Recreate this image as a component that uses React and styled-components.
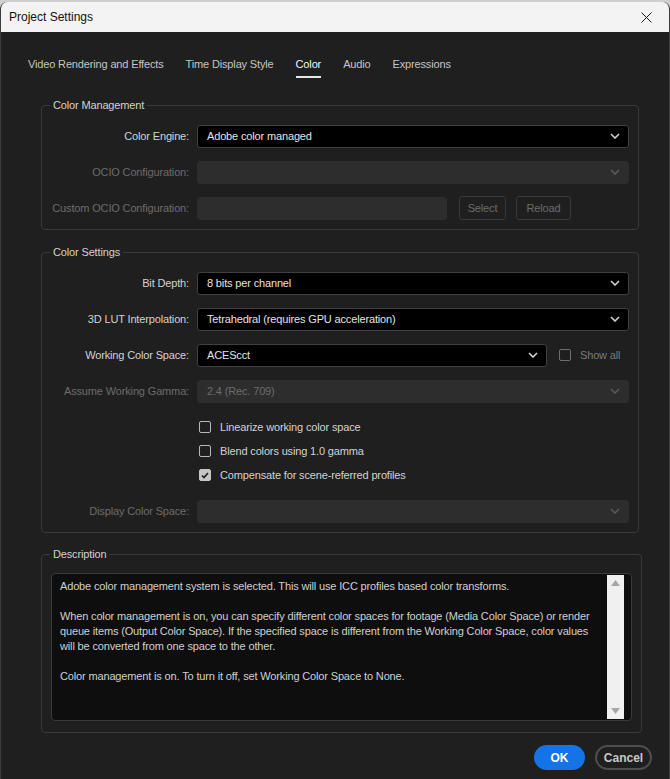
import React from 'react';
import styled, { createGlobalStyle, css } from 'styled-components';

const Colors = {
  page: '#cfcfcf',
  titleBar: '#f3f3f3',
  body: '#1f1f1f',
  border: '#3a3a3a',
  text: '#d2d2d2',
  dim: '#6c6c6c',
  field: '#000000',
  disabledField: '#2d2d2d',
  area: '#0e0e0e',
  blue: '#1473e6',
};

const GlobalStyle = createGlobalStyle`
  html, body {
    margin: 0;
    padding: 0;
    background: ${Colors.page};
  }
  body {
    font-family: "Liberation Sans", Arial, sans-serif;
    font-size: 11px;
    letter-spacing: -0.15px;
  }
`;

const Window = styled.div`
  width: 670px;
  height: 777px;
  margin-top: 2px;
  box-sizing: border-box;
  border-left: 1px solid #3c3c3c;
  border-right: 1px solid #3c3c3c;
  border-radius: 7px 7px 0 0;
  overflow: hidden;
  background: ${Colors.body};
  display: flex;
  flex-direction: column;
`;

const TitleBar = styled.div`
  height: 30px;
  flex: none;
  background: ${Colors.titleBar};
  display: flex;
  align-items: center;
  justify-content: space-between;
  padding: 0 17px 0 8px;
  font-family: "Segoe UI", "Liberation Sans", sans-serif;
  font-size: 12px;
  letter-spacing: 0;
  color: #111;
`;

const CloseButton = styled.svg`
  width: 11px;
  height: 11px;
`;

const Body = styled.div`
  flex: 1;
  display: flex;
  flex-direction: column;
`;

const Tabs = styled.div`
  display: flex;
  gap: 22px;
  padding: 24px 0 0 27px;
  margin-bottom: 20px;
`;

const Tab = styled.div`
  line-height: 16px;
  padding-bottom: 4px;
  border-bottom: 2px solid transparent;
  color: #c4c4c4;
  ${({ $active }) =>
    $active &&
    css`
      color: #f4f4f4;
      border-bottom-color: #e6e6e6;
    `}
`;

const Group = styled.fieldset`
  margin: 0 ${({ $right }) => ($right ? $right : 30)}px ${({ $below }) => ($below ? $below : 0)}px 40px;
  padding: 6px 9px 3px 0;
  border: 1px solid ${Colors.border};
  border-radius: 4px;
  min-width: 0;
`;

const Legend = styled.legend`
  margin-left: 8px;
  padding: 0 3px;
  line-height: 14px;
  color: ${Colors.text};
`;

const Row = styled.div`
  display: flex;
  align-items: center;
  height: 36px;
`;

const Label = styled.div`
  width: 147px;
  padding-right: 8px;
  flex: none;
  text-align: right;
  white-space: nowrap;
  color: ${({ $disabled }) => ($disabled ? Colors.dim : Colors.text)};
`;

const SelectBox = styled.div`
  box-sizing: border-box;
  height: 23px;
  width: ${({ $width }) => ($width ? `${$width}px` : 'auto')};
  flex: ${({ $width }) => ($width ? 'none' : '1')};
  display: flex;
  align-items: center;
  justify-content: space-between;
  padding: 0 8px 0 9px;
  border-radius: 3px;
  border: 1px solid ${({ $disabled }) => ($disabled ? Colors.disabledField : '#404040')};
  background: ${({ $disabled }) => ($disabled ? Colors.disabledField : Colors.field)};
  color: ${({ $disabled }) => ($disabled ? Colors.dim : '#e4e4e4')};
  white-space: nowrap;
`;

const Chevron = styled.svg`
  width: 10px;
  height: 6px;
  flex: none;
`;

const SmallButton = styled.div`
  box-sizing: border-box;
  height: 24px;
  width: ${({ $width }) => $width}px;
  margin-left: ${({ $gap }) => $gap}px;
  border: 1px solid ${Colors.border};
  border-radius: 3px;
  display: flex;
  align-items: center;
  justify-content: center;
  color: ${Colors.dim};
`;

const Checks = styled.div`
  padding: 6px 0;
`;

const CheckRow = styled.div`
  display: flex;
  align-items: center;
  height: 24px;
  padding-left: ${({ $indent }) => ($indent ? $indent : 0)}px;
  color: ${({ $dim }) => ($dim ? '#7a7a7a' : Colors.text)};
`;

const Box = styled.div`
  box-sizing: border-box;
  width: 12px;
  height: 12px;
  flex: none;
  margin-right: 9px;
  border-radius: 2px;
  border: 1.5px solid ${({ $dim }) => ($dim ? '#6e6e6e' : '#b8b8b8')};
  display: flex;
  align-items: center;
  justify-content: center;
  ${({ $checked }) =>
    $checked &&
    css`
      background: #c6c6c6;
      border-color: #c6c6c6;
    `}
`;

const TextArea = styled.div`
  margin: 6px 0 8px 9px;
  height: 148px;
  box-sizing: border-box;
  border: 1px solid ${Colors.border};
  border-radius: 4px;
  background: ${Colors.area};
  display: flex;
  padding: 1px 7px 1px 0;
`;

const TextContent = styled.div`
  flex: 1;
  padding: 4px 0 0 8px;
  line-height: 15px;
  color: #d0d0d0;
  overflow: hidden;
`;

const Line = styled.div`
  white-space: nowrap;
  height: 15px;
`;

const ScrollBar = styled.div`
  width: 17px;
  flex: none;
  background: #f0f0f0;
  display: flex;
  flex-direction: column;
  justify-content: space-between;
  align-items: center;
  padding: 5px 0;
`;

const Footer = styled.div`
  display: flex;
  justify-content: flex-end;
  gap: 10px;
  padding: 12px 17px 0 0;
`;

const DialogButton = styled.div`
  box-sizing: border-box;
  height: 25px;
  width: ${({ $width }) => $width}px;
  border-radius: 13px;
  display: flex;
  align-items: center;
  justify-content: center;
  font-weight: bold;
  font-size: 12px;
  letter-spacing: 0;
  ${({ $primary }) =>
    $primary
      ? css`
          background: ${Colors.blue};
          color: #fff;
        `
      : css`
          border: 2px solid #4e4e4e;
          color: #c8c8c8;
        `}
`;

const ChevronIcon = ({ disabled }) => (
  <Chevron viewBox="0 0 10 6">
    <polyline
      points="1,1 5,5 9,1"
      fill="none"
      stroke={disabled ? '#5a5a5a' : '#d0d0d0'}
      strokeWidth="1.6"
    />
  </Chevron>
);

const Select = ({ value, disabled, width }) => (
  <SelectBox $disabled={disabled} $width={width}>
    <span>{value}</span>
    <ChevronIcon disabled={disabled} />
  </SelectBox>
);

const Check = ({ checked, dim }) => (
  <Box $checked={checked} $dim={dim}>
    {checked && (
      <svg width="8" height="7" viewBox="0 0 8 7">
        <polyline points="1,3.5 3,5.5 7,1" fill="none" stroke="#1a1a1a" strokeWidth="1.6" />
      </svg>
    )}
  </Box>
);

const Arrow = ({ up }) => (
  <svg width="9" height="6" viewBox="0 0 9 6">
    <polygon points={up ? '0,6 4.5,0 9,6' : '0,0 4.5,6 9,0'} fill="#a6a6a6" />
  </svg>
);

const tabs = ['Video Rendering and Effects', 'Time Display Style', 'Color', 'Audio', 'Expressions'];

const description = [
  'Adobe color management system is selected. This will use ICC profiles based color transforms.',
  '',
  'When color management is on, you can specify different color spaces for footage (Media Color Space) or render',
  'queue items (Output Color Space). If the specified space is different from the Working Color Space, color values',
  'will be converted from one space to the other.',
  '',
  'Color management is on. To turn it off, set Working Color Space to None.',
];

const App = () => {
  return (
    <>
      <GlobalStyle />
      <Window>
        <TitleBar>
          <span>Project Settings</span>
          <CloseButton viewBox="0 0 11 11">
            <path d="M0.5 0.5 L10.5 10.5 M10.5 0.5 L0.5 10.5" stroke="#1a1a1a" strokeWidth="1" />
          </CloseButton>
        </TitleBar>
        <Body>
          <Tabs>
            {tabs.map(tab => (
              <Tab key={tab} $active={tab === 'Color'}>
                {tab}
              </Tab>
            ))}
          </Tabs>

          <Group $below={15}>
            <Legend>Color Management</Legend>
            <Row>
              <Label>Color Engine:</Label>
              <Select value="Adobe color managed" />
            </Row>
            <Row>
              <Label $disabled>OCIO Configuration:</Label>
              <Select disabled />
            </Row>
            <Row>
              <Label $disabled>Custom OCIO Configuration:</Label>
              <SelectBox $disabled $width={250} />
              <SmallButton $width={47} $gap={12}>Select</SmallButton>
              <SmallButton $width={55} $gap={10}>Reload</SmallButton>
            </Row>
          </Group>

          <Group $below={14}>
            <Legend>Color Settings</Legend>
            <Row>
              <Label>Bit Depth:</Label>
              <Select value="8 bits per channel" />
            </Row>
            <Row>
              <Label>3D LUT Interpolation:</Label>
              <Select value="Tetrahedral (requires GPU acceleration)" />
            </Row>
            <Row>
              <Label>Working Color Space:</Label>
              <Select value="ACEScct" width={350} />
              <CheckRow $indent={12} $dim>
                <Check dim />
                Show all
              </CheckRow>
            </Row>
            <Row>
              <Label $disabled>Assume Working Gamma:</Label>
              <Select value="2.4 (Rec. 709)" disabled />
            </Row>
            <Checks>
              <CheckRow $indent={157}>
                <Check />
                Linearize working color space
              </CheckRow>
              <CheckRow $indent={157}>
                <Check />
                Blend colors using 1.0 gamma
              </CheckRow>
              <CheckRow $indent={157}>
                <Check checked />
                Compensate for scene-referred profiles
              </CheckRow>
            </Checks>
            <Row>
              <Label $disabled>Display Color Space:</Label>
              <Select disabled />
            </Row>
          </Group>

          <Group $right={27}>
            <Legend>Description</Legend>
            <TextArea>
              <TextContent>
                {description.map((line, i) => (
                  <Line key={i}>{line}</Line>
                ))}
              </TextContent>
              <ScrollBar>
                <Arrow up />
                <Arrow />
              </ScrollBar>
            </TextArea>
          </Group>

          <Footer>
            <DialogButton $primary $width={51}>OK</DialogButton>
            <DialogButton $width={57}>Cancel</DialogButton>
          </Footer>
        </Body>
      </Window>
    </>
  );
};

export default App;
